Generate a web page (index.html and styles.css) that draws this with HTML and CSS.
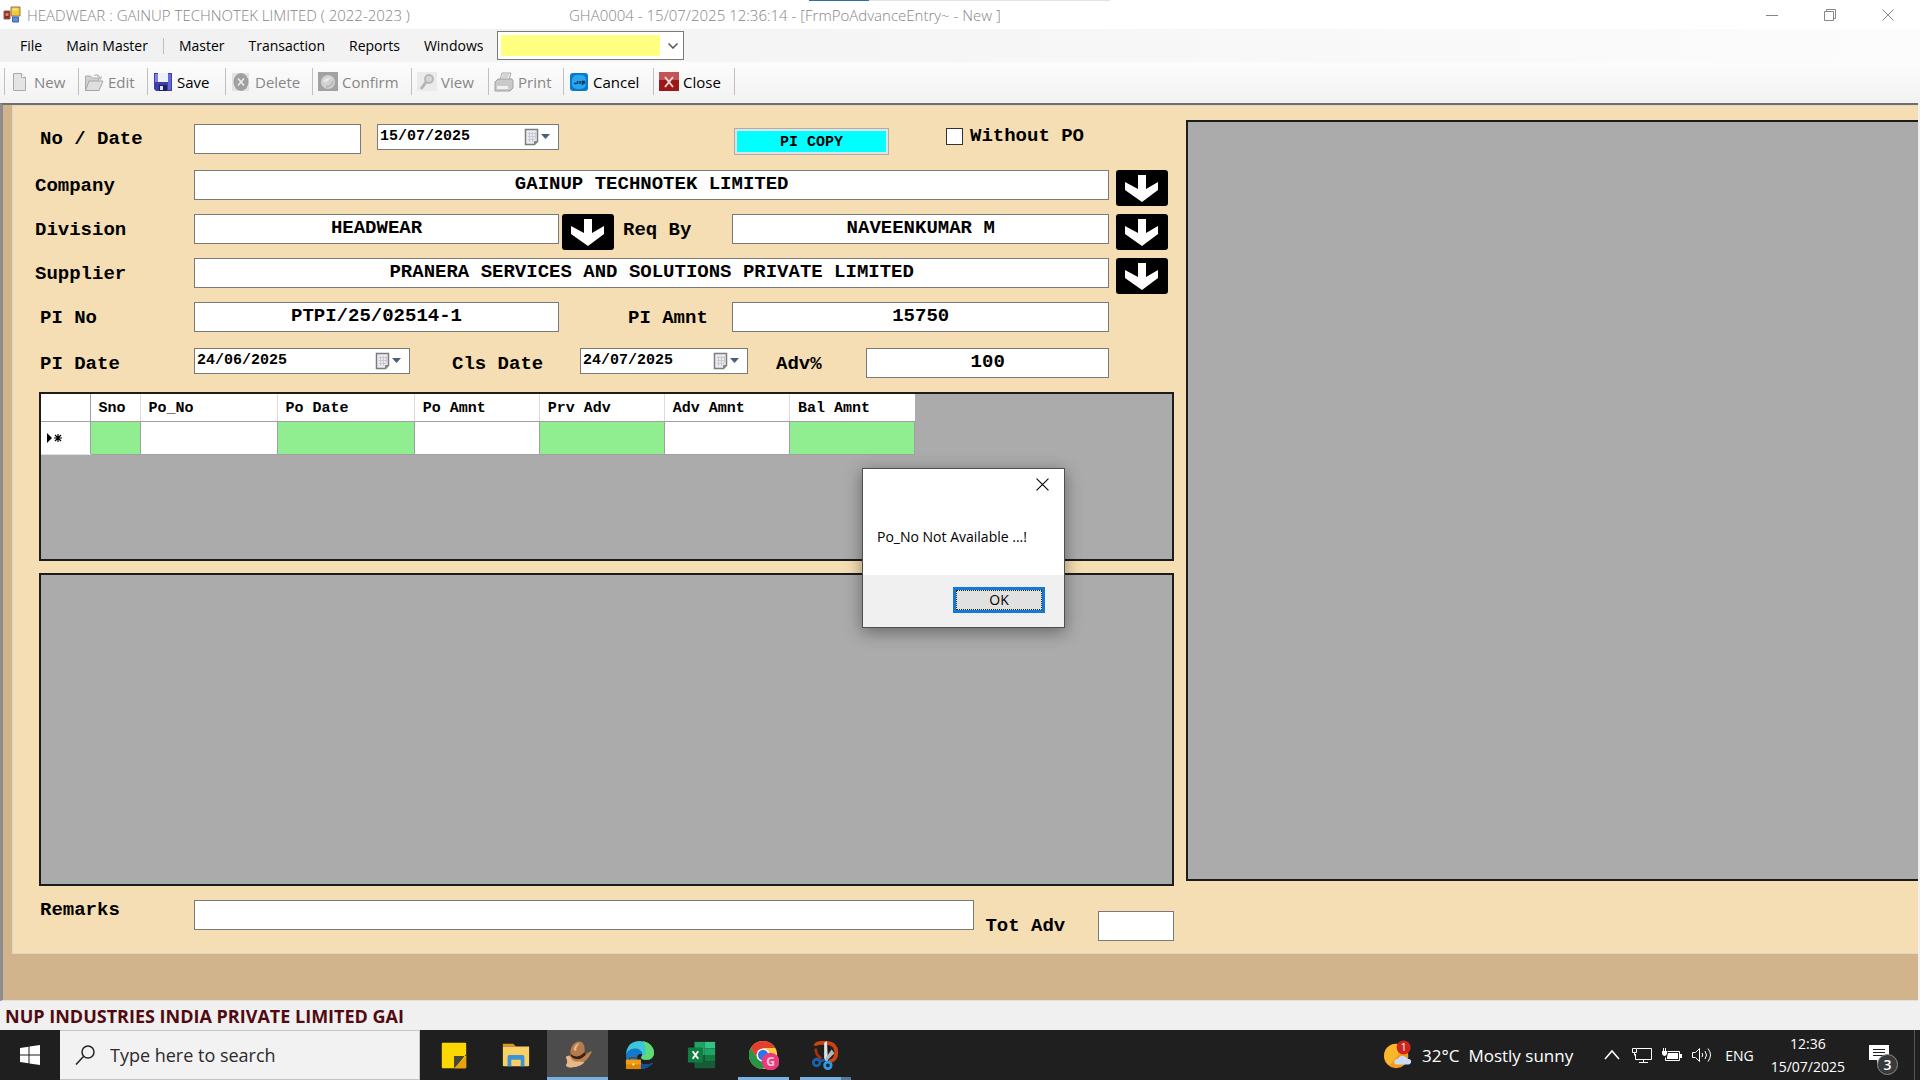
FILE: index.html
```html
<!DOCTYPE html>
<html lang="en">
<head>
    <meta charset="UTF-8">
    <meta name="viewport" content="width=device-width, initial-scale=1.0">
    <title>FrmPoAdvanceEntry</title>
    <link rel="stylesheet" href="styles.css">
</head>
<body>
    <svg class="sprite" xmlns="http://www.w3.org/2000/svg">
        <symbol id="arrow-down" viewBox="0 0 52 36">
            <path d="M22 5h8v14l12-7v8L26 32 9 20v-8l13 7z" fill="#fff"/>
        </symbol>
        <symbol id="calendar" viewBox="0 0 28 18">
            <path d="M1.500 1.500h12v12l-3 3h-9z" fill="#ececf0" stroke="#7d7d7d" stroke-width="1.500"/>
            <path d="M4 5.500h8M4 8.500h8M4 11.500h7M5.500 4v10M8.500 4v10M11.500 4v7" stroke="#c6c9d4" fill="none"/>
            <path d="M14 13h-4v4z" fill="#888"/>
            <path d="M17 6h9l-4.500 5z" fill="#45607f"/>
        </symbol>
        <symbol id="close-x" viewBox="0 0 12 12">
            <path d="M.5.5l11 11M11.500.5l-11 11" stroke="currentColor" fill="none"/>
        </symbol>
    </svg>

    <header class="title-bar">
        <svg class="app-icon" viewBox="0 0 18 18">
            <path d="M1 5h6v8H1z" fill="#a81f18" stroke="#6e6e6e"/>
            <path d="M2.500 7h3v3h-3z" fill="#e8766a"/>
            <path d="M8 1h9v9H8z" fill="#f3c63c" stroke="#8a7a4a"/>
            <path d="M9.500 11h6v5h-6z" fill="#5b8de0" stroke="#3c62a8"/>
            <path d="M9.500 2.500h5v2h-5z" fill="#fbe48d"/>
        </svg>
        <span class="title-left">HEADWEAR : GAINUP TECHNOTEK LIMITED ( 2022-2023 )</span>
        <span class="title-mid">GHA0004 - 15/07/2025 12:36:14 - [FrmPoAdvanceEntry~ - New ]</span>
        <div class="share-strip"></div>
        <div class="window-controls">
            <button type="button" aria-label="Minimize"><svg viewBox="0 0 12 12"><path d="M0 6.500h12" stroke="currentColor"/></svg></button>
            <button type="button" aria-label="Restore"><svg viewBox="0 0 12 12"><path d="M.5 2.500h9v9h-9zM2.500 2.500v-2h9v9h-2" stroke="currentColor" fill="none"/></svg></button>
            <button type="button" aria-label="Close"><svg><use href="#close-x"/></svg></button>
        </div>
    </header>

    <nav class="menu-bar">
        <a href="#">File</a>
        <a href="#">Main Master</a>
        <span class="menu-sep"></span>
        <a href="#">Master</a>
        <a href="#">Transaction</a>
        <a href="#">Reports</a>
        <a href="#">Windows</a>
        <div class="menu-combo">
            <select aria-label="Go to form"><option></option></select>
            <svg viewBox="0 0 10 6"><path d="M.5.5L5 5 9.500.5" stroke="#555" stroke-width="1.500" fill="none"/></svg>
        </div>
    </nav>

    <div class="tool-bar">
        <button type="button" class="w-new" disabled>
            <svg viewBox="0 0 20 20"><path d="M3.500 1.500h8l4 4v13h-12z" fill="#e4e4e4" stroke="#aaa"/><path d="M11.500 1.500v4h4" fill="#fff" stroke="#aaa"/></svg>New
        </button>
        <button type="button" class="w-edit" disabled>
            <svg viewBox="0 0 20 20"><path d="M1.500 18V4h5l2 2h6v3" fill="#d2d2d2" stroke="#aaa"/><path d="M1.500 18.500L5 9h14l-4 9.500z" fill="#dedede" stroke="#a5a5a5"/><path d="M9 4c3-3 6-2 7 1l2-1-1 4-4-2 2-.5c-1-2-3-2-6-1.500z" fill="#bbb"/></svg>Edit
        </button>
        <button type="button" class="w-save">
            <svg viewBox="0 0 20 20"><path d="M1 1h18v18H3l-2-2z" fill="#3c3fa8"/><path d="M2 2h3v8H2z" fill="#8184df"/><path d="M5 1h10v9H5z" fill="#eef0fb"/><path d="M6 13h8v6H6z" fill="#20225e"/><path d="M7 14h3v4H7z" fill="#dfe2f4"/><path d="M15 2h3v16h-3z" fill="#6569cf"/></svg>Save
        </button>
        <button type="button" class="w-delete" disabled>
            <svg viewBox="0 0 20 20"><path d="M1 1h17v18H1z" fill="#e2e2e2"/><ellipse cx="10" cy="10" rx="7.500" ry="9" fill="#a0a0a0"/><path d="M7 6.500l6 7m0-7l-6 7" stroke="#eee" stroke-width="1.500"/></svg>Delete
        </button>
        <button type="button" class="w-confirm" disabled>
            <svg viewBox="0 0 20 20"><path d="M0 0h20v19H0z" fill="#a2a2a2"/><circle cx="10" cy="10" r="7" fill="#d2d2d2"/><path d="M5 9q3-4 9-3-5 1-5 5z" fill="#e8e8e8"/><path d="M8 15q6-1 7-6" stroke="#bababa" stroke-width="2" fill="none"/></svg>Confirm
        </button>
        <button type="button" class="w-view" disabled>
            <svg viewBox="0 0 20 20"><path d="M0 0h20v19H0z" fill="#ebebeb"/><circle cx="12" cy="7" r="4" fill="#d6d6d6" stroke="#b8b8b8" stroke-width="2"/><path d="M9 10l-5 7" stroke="#b5b5b5" stroke-width="3"/></svg>View
        </button>
        <button type="button" class="w-print" disabled>
            <svg viewBox="0 0 20 20"><path d="M6 8l2-7h9l-2 7z" fill="#f2f2f2" stroke="#a9a9a9"/><path d="M1 10l3-3h14l1 2v7l-3 3H1z" fill="#c9c9c9" stroke="#a0a0a0"/><path d="M3 14h11v3H3z" fill="#f0f0f0"/><path d="M9 3h6M8 5h6" stroke="#b5b5b5"/></svg>Print
        </button>
        <button type="button" class="w-cancel">
            <svg viewBox="0 0 20 20"><rect x="1" y="1" width="18" height="18" rx="3" fill="#0b79c9"/><rect x="3" y="3" width="14" height="14" rx="5" fill="#2aa6ee"/><path d="M5 11.500h2.500M8.500 9v3M11 9v3M12.500 9.500h3v1.500h-2v2" stroke="#063a66" stroke-width="1.500" fill="none"/></svg>Cancel
        </button>
        <button type="button" class="w-close">
            <svg viewBox="0 0 20 20"><path d="M0 0h20v19H0z" fill="#9c1717"/><path d="M0 0h20v8H0z" fill="#c15454"/><path d="M6 5l8 10M14 5L6 15" stroke="#f0dada" stroke-width="2"/></svg>Close
        </button>
    </div>

    <main class="workspace">
        <form class="entry-form">
            <section class="entry">
                <div class="row row-first">
                    <label class="lead inset" for="no">No / Date</label>
                    <input id="no" class="no" type="text">
                    <div class="date-box date-entry">
                        <input type="text" value="15/07/2025" aria-label="Entry date">
                        <button type="button" aria-label="Open calendar"><svg><use href="#calendar"/></svg></button>
                    </div>
                    <button type="button" class="pi-copy">PI COPY</button>
                    <label class="without-po"><input type="checkbox">Without PO</label>
                </div>
                <div class="row">
                    <label class="lead" for="company">Company</label>
                    <input id="company" class="grow" type="text" value="GAINUP TECHNOTEK LIMITED">
                    <button type="button" class="pick pick-end" aria-label="Pick company"><svg><use href="#arrow-down"/></svg></button>
                </div>
                <div class="row">
                    <label class="lead" for="division">Division</label>
                    <input id="division" class="grow-left" type="text" value="HEADWEAR">
                    <button type="button" class="pick" aria-label="Pick division"><svg><use href="#arrow-down"/></svg></button>
                    <label class="req-by" for="req-by">Req By</label>
                    <input id="req-by" class="grow-right" type="text" value="NAVEENKUMAR M">
                    <button type="button" class="pick pick-end" aria-label="Pick requester"><svg><use href="#arrow-down"/></svg></button>
                </div>
                <div class="row">
                    <label class="lead" for="supplier">Supplier</label>
                    <input id="supplier" class="grow" type="text" value="PRANERA SERVICES AND SOLUTIONS PRIVATE LIMITED">
                    <button type="button" class="pick pick-end" aria-label="Pick supplier"><svg><use href="#arrow-down"/></svg></button>
                </div>
                <div class="row row-short">
                    <label class="lead inset" for="pi-no">PI No</label>
                    <input id="pi-no" class="grow-left" type="text" value="PTPI/25/02514-1">
                    <label class="pi-amnt" for="pi-amnt">PI Amnt</label>
                    <input id="pi-amnt" class="grow-right" type="text" value="15750">
                </div>
                <div class="row row-short row-last">
                    <label class="lead inset" for="pi-date">PI Date</label>
                    <div class="date-box date-pi">
                        <input id="pi-date" type="text" value="24/06/2025">
                        <button type="button" aria-label="Open calendar"><svg><use href="#calendar"/></svg></button>
                    </div>
                    <label class="cls-date" for="cls-date">Cls Date</label>
                    <div class="date-box date-cls">
                        <input id="cls-date" type="text" value="24/07/2025">
                        <button type="button" aria-label="Open calendar"><svg><use href="#calendar"/></svg></button>
                    </div>
                    <label class="adv" for="adv">Adv%</label>
                    <input id="adv" class="grow" type="text" value="100">
                </div>

                <div class="grid-box grid-po">
                    <table>
                        <thead>
                            <tr>
                                <th class="c-head"></th>
                                <th class="c-sno">Sno</th>
                                <th class="c-wide">Po_No</th>
                                <th class="c-wide">Po Date</th>
                                <th>Po Amnt</th>
                                <th>Prv Adv</th>
                                <th>Adv Amnt</th>
                                <th>Bal Amnt</th>
                            </tr>
                        </thead>
                        <tbody>
                            <tr>
                                <td class="marker"><svg viewBox="0 0 16 10"><path d="M0 0l5 5-5 5z"/><path d="M11 1v8M7 5h8M8 2l6 6M14 2l-6 6" stroke="#000" stroke-width="1.200"/></svg></td>
                                <td class="locked"></td>
                                <td></td>
                                <td class="locked"></td>
                                <td></td>
                                <td class="locked"></td>
                                <td></td>
                                <td class="locked"></td>
                            </tr>
                        </tbody>
                    </table>
                </div>
                <div class="grid-box grid-detail"></div>

                <div class="row row-foot">
                    <label class="lead inset" for="remarks">Remarks</label>
                    <input id="remarks" class="grow" type="text">
                    <label class="tot-label" for="tot-adv">Tot Adv</label>
                    <input id="tot-adv" class="tot" type="text">
                </div>
            </section>
            <aside class="grid-box grid-side"></aside>
        </form>
    </main>

    <div class="status-bar">NUP INDUSTRIES INDIA PRIVATE LIMITED GAI</div>

    <footer class="taskbar">
        <button type="button" class="start" aria-label="Start">
            <svg viewBox="0 0 20 20"><path d="M0 3l8.500-1.200v7.700H0zM9.500 1.600L20 0v9.500H9.500zM0 10.500h8.500v7.700L0 17zM9.500 10.500H20V20L9.500 18.400z" fill="#fff"/></svg>
        </button>
        <label class="search">
            <svg viewBox="0 0 20 20"><circle cx="13" cy="7" r="6" fill="none" stroke="#222" stroke-width="1.500"/><path d="M8.500 11.500L1 19.500" stroke="#222" stroke-width="1.500"/></svg>
            <input type="text" placeholder="Type here to search" aria-label="Type here to search">
        </label>
        <div class="apps">
            <button type="button" aria-label="Sticky Notes">
                <svg viewBox="0 0 32 32"><rect x="3" y="3" width="26" height="27" rx="1" fill="#fdd800"/><path d="M16 17h13v-2L17 30h-1z" fill="#48453c"/><path d="M29 17v12q0 1-1 1H16z" fill="#e5a50a"/></svg>
            </button>
            <button type="button" aria-label="File Explorer">
                <svg viewBox="0 0 32 32"><path d="M2 4h11l3 3H2z" fill="#d99a1b"/><path d="M2 7h28v20q0 1-1 1H3q-1 0-1-1z" fill="#fad067"/><path d="M7 18q0-2 2-2h14q2 0 2 2v10h-4v-7H11v7H7z" fill="#3b93d8"/></svg>
            </button>
            <button type="button" class="active" aria-label="Gainup ERP">
                <svg viewBox="0 0 32 32"><path d="M3 18q3-3 6-1 8 5 15-1 2-3 7-4-3 7-8 11-6 6-13 6-6 1-7-2 3-3 0-9z" fill="#b9804f"/><path d="M3 18q3-2 5 0 2 6 9 5 3 0 6 1-6 5-13 5-6 1-7-2 3-3 0-9z" fill="#e6b98a"/><path d="M8 16Q7 7 13 3q3-2 7-1 4 3 3 12-7 7-15 2z" fill="#b67b4b"/><path d="M11 10q2-6 7-7-4 4-4 9z" fill="#e5b98b"/><path d="M8 15q7 6 15-2l1 3q-7 8-15 2z" fill="#3a2113"/></svg>
            </button>
            <button type="button" aria-label="Edge">
                <svg viewBox="0 0 32 32"><path d="M1 16Q2 1 16 1q14 1 15 13-1 8-10 7-6-1-3-4 1-2-1-5-4-4-10-2-4 2-6 6z" fill="#3cc5dc"/><path d="M19 1q12 3 12 13-1 8-10 7-5-1-3-4 8 0 1-16z" fill="#5edb72"/><path d="M1 17q1-8 10-8 6 0 7 6-5-1-5 4 1 6 8 7 6 0 9-2-5 7-14 7Q2 30 1 17z" fill="#1479ce"/><path d="M13 19q1 6 8 7 5 0 9-2-5 7-14 7-4-4-3-12z" fill="#0f4f9c"/><rect x="1" y="21" width="16" height="10" fill="#dc8506"/><path d="M1 21h16v5H1z" fill="#f29d18"/><path d="M5 21v-2h8v2" fill="none" stroke="#6b3a05"/><rect x="8" y="25" width="2" height="2" fill="#fff0a8"/></svg>
            </button>
            <button type="button" aria-label="Excel">
                <svg viewBox="0 0 32 32"><path d="M8 2h11v14H8z" fill="#21a366"/><path d="M19 2h11v7H19z" fill="#33c481"/><path d="M19 9h11v7H19z" fill="#21a366"/><path d="M8 16h11v7H8z" fill="#185c37"/><path d="M19 16h11v7H19z" fill="#107c41"/><path d="M8 23h22v6q0 1-1 1H9q-1 0-1-1z" fill="#185c37"/><rect x="1" y="8" width="16" height="16" rx="1" fill="#107c41"/><path d="M6 12l6 8M12 12l-6 8" stroke="#fff" stroke-width="2"/></svg>
            </button>
            <button type="button" class="running" aria-label="Chrome">
                <svg viewBox="0 0 32 32"><circle cx="15" cy="16" r="15" fill="#ffcf3f"/><path d="M2 8.500A15 15 0 0 1 28 8.500H15L8.500 19.500z" fill="#e33e2f"/><path d="M2 8.500A15 15 0 0 0 15 31l7-11-13 0z" fill="#279447"/><circle cx="15" cy="16" r="7" fill="#fff"/><circle cx="15" cy="16" r="5.500" fill="#2f74e6"/><circle cx="23" cy="23" r="9.500" fill="#e93a7c"/><text x="23" y="28" text-anchor="middle" fill="#fbc7da" font-size="13" font-weight="700">G</text></svg>
            </button>
            <button type="button" class="running stacked" aria-label="Snip &amp; Sketch">
                <svg viewBox="0 0 32 32"><path d="M5 6Q5 3 12 3h5q10 1 10 10 0 9-8 10" fill="none" stroke="#cf4312" stroke-width="4"/><path d="M5 9q0 7 6 11" fill="none" stroke="#a5300a" stroke-width="3"/><path d="M14 3l3-2 1 21h-4z" fill="#dfe3e6"/><path d="M22 10l3 4-8 8-2-2z" fill="#b2b8bd"/><circle cx="6" cy="24" r="3.500" fill="none" stroke="#1763b2" stroke-width="3"/><circle cx="18" cy="27" r="3.500" fill="none" stroke="#2b9be6" stroke-width="3"/><path d="M9 23l6-2" stroke="#1763b2" stroke-width="2.500"/></svg>
            </button>
        </div>
        <div class="tray">
            <a href="#" class="weather">
                <svg viewBox="0 0 32 32"><circle cx="14" cy="17" r="13" fill="#f79a1c"/><path d="M3 10A13 13 0 0 1 23 8L7 27A13 13 0 0 1 3 10z" fill="#fbb72c"/><path d="M14 26q-2 0-2-3 1-3 4-3 2-4 6-3 3 1 4 3 4 0 4 3 0 3-3 3z" fill="#c6dcf8"/><circle cx="22" cy="8" r="7.500" fill="#c9261e"/><text x="22" y="12" text-anchor="middle" fill="#fff" font-size="11">1</text></svg>
                <span>32°C</span>
                <span>Mostly sunny</span>
            </a>
            <div class="tray-icons">
                <svg class="caret" viewBox="0 0 16 20"><path d="M1 14l7-8 7 8" fill="none" stroke="#fff" stroke-width="1.500"/></svg>
                <svg viewBox="0 0 22 20"><path d="M6 3.500h14.500v11H4.500V9M8 17.500h9M12.500 14.500v3" fill="none" stroke="#fff"/><path d="M1.500 3.500h4v4h-4zM3.500 7.500v3" fill="#1f1f1f" stroke="#fff"/></svg>
                <svg viewBox="0 0 22 20"><path d="M6.500 6.500h12v9h-14v-3" fill="none" stroke="#fff"/><path d="M7 8h10v6H6v-2zM19 9h2v4h-2zM1 6h5v3q-1 2-2.500 2T1 9zM2 3h1v3H2zM4 3h1v3H4z" fill="#fff"/></svg>
                <svg viewBox="0 0 22 20"><path d="M1.500 7.500h3l4-4v13l-4-4h-3z" fill="none" stroke="#fff"/><path d="M11 8q1.500 2 0 4M14 6q3 4 0 8M17 3.500q5 6.500 0 13" fill="none" stroke="#fff"/></svg>
            </div>
            <span class="lang">ENG</span>
            <div class="clock"><span>12:36</span><span>15/07/2025</span></div>
            <button type="button" class="notify" aria-label="Notifications">
                <svg viewBox="0 0 22 22"><path d="M1 1h20v15h-8l-4 5v-5H1z" fill="#fff"/><path d="M5 5.500h12M5 8.500h12M5 11.500h12" stroke="#1f1f1f"/></svg>
                <span class="badge">3</span>
            </button>
        </div>
    </footer>

    <div class="message-box" role="dialog" aria-label="Message">
        <div class="message-body">
            <button type="button" class="message-close" aria-label="Close"><svg><use href="#close-x"/></svg></button>
            <p>Po_No Not Available ...!</p>
        </div>
        <div class="message-actions">
            <button type="button" class="ok">OK</button>
        </div>
    </div>
</body>
</html>
```
FILE: styles.css
```css
:root {
    --wheat: #f5deb3;
    --tan: #d2b48c;
    --grid-gray: #ababab;
    --locked: #90ee90;
    --task: #1f1f1f;
    --ui: "Open Sans", "Noto Sans", sans-serif;
    --mono: "Liberation Mono", monospace;
}

* {
    box-sizing: border-box;
}

body {
    margin: 0;
    height: 100vh;
    display: flex;
    flex-direction: column;
    overflow: hidden;
    font-family: var(--ui);
    font-size: 15px;
    background: #f0f0f0;
    color: #000;
}

button,
input,
select {
    font: inherit;
    color: inherit;
    border-radius: 0;
    margin: 0;
}

button {
    padding: 0;
    border: none;
    background: none;
}

a {
    color: inherit;
    text-decoration: none;
}

svg {
    display: block;
    flex: none;
}

.sprite {
    position: absolute;
    width: 0;
    height: 0;
}

/* title bar */
.title-bar {
    position: relative;
    flex: none;
    height: 29px;
    display: flex;
    align-items: center;
    padding-left: 3px;
    background: #fff;
    color: #868686;
    font-size: 15px;
    font-weight: 300;
    white-space: nowrap;
}

.app-icon {
    width: 18px;
    height: 18px;
    margin-right: 6px;
}

.title-left {
    width: 542px;
}

.share-strip {
    position: absolute;
    top: 0;
    left: 809px;
    width: 301px;
    height: 1px;
    background: linear-gradient(90deg, #2f6da8 60px, #e3e3e3 60px);
}

.window-controls {
    display: flex;
    margin-left: auto;
    height: 100%;
    padding-right: 3px;
}

.window-controls button {
    width: 58px;
    display: flex;
    align-items: center;
    justify-content: center;
}

.window-controls svg {
    width: 12px;
    height: 12px;
}

/* menu */
.menu-bar {
    flex: none;
    height: 33px;
    display: flex;
    align-items: center;
    gap: 24px;
    padding-left: 20px;
    background: linear-gradient(90deg, #f0f0f0, #fcfcfc);
    font-size: 14px;
}

.menu-sep {
    width: 1px;
    height: 16px;
    margin: 0 -9px;
    background: #bdbdbd;
}

.menu-combo {
    position: relative;
    width: 187px;
    margin-left: -10px;
}

.menu-combo select {
    display: block;
    width: 100%;
    height: 29px;
    appearance: none;
    border: 1px solid #7a7a7a;
    background: linear-gradient(#ffff80, #ffff80) 3px 3px / calc(100% - 26px) 21px no-repeat #fff;
}

.menu-combo svg {
    position: absolute;
    right: 6px;
    top: 12px;
    width: 10px;
    height: 6px;
    pointer-events: none;
}

/* toolbar */
.tool-bar {
    flex: none;
    height: 41px;
    display: flex;
    padding: 6px 0 8px 4px;
    background: linear-gradient(#fcfcfc, #f2f2f2);
}

.tool-bar button {
    display: flex;
    align-items: center;
    gap: 4px;
    padding-left: 5px;
    border-left: 1px solid #c0c0c0;
    font-size: 15px;
}

.tool-bar button:disabled {
    color: #868686;
}

.tool-bar button:last-child {
    border-right: 1px solid #c0c0c0;
}

.tool-bar svg {
    width: 20px;
    height: 20px;
}

.w-new { width: 74px; }
.w-edit { width: 69px; }
.w-save { width: 78px; }
.w-delete { width: 87px; }
.w-confirm { width: 99px; }
.w-view { width: 77px; }
.w-print { width: 75px; }
.w-cancel { width: 90px; }
.w-close { width: 82px; }

/* form area */
.workspace {
    flex: 1;
    min-height: 0;
    display: flex;
    flex-direction: column;
    margin-right: 2px;
    padding: 0 0 46px 9px;
    border-top: 2px solid #6f6f6b;
    border-left: 3px solid #8d8d8d;
    border-bottom: 1px solid #e6e0d8;
    background: var(--tan);
}

.entry-form {
    flex: 1;
    min-height: 0;
    display: grid;
    grid-template-columns: 1140fr 732fr;
    gap: 12px;
    padding: 14px 0 0 22px;
    border: 1px solid #dcd6cc;
    border-right: none;
    background: var(--wheat);
    font-family: var(--mono);
    font-weight: 700;
    font-size: 19px;
}

.entry {
    display: flex;
    flex-direction: column;
    min-width: 0;
    padding: 4px 0 12px;
}

.row {
    flex: none;
    height: 30px;
    display: flex;
    align-items: flex-start;
    margin-bottom: 14px;
    padding-right: 6px;
    line-height: 32px;
}

.row-first {
    margin-bottom: 16px;
    line-height: 30px;
}

.row-short {
    padding-right: 65px;
    margin-bottom: 16px;
}

.row-last {
    margin-bottom: 14px;
}

.row label {
    white-space: nowrap;
}

.row .lead {
    flex: none;
    width: 159px;
}

.row .inset {
    padding-left: 5px;
}

.row input[type="text"] {
    height: 30px;
    min-width: 0;
    padding: 0 2px 2px;
    border: 1px solid #7a7a7a;
    background: #fff;
    text-align: center;
}

.row .grow {
    flex: 1;
}

.row .grow-left {
    flex: 29;
}

.row .grow-right {
    flex: 30;
}

.row .no {
    width: 167px;
    margin-right: 16px;
}

.date-box {
    flex: none;
    height: 26px;
    display: flex;
    align-items: center;
    border: 1px solid #7a7a7a;
    background: #fff;
    font-size: 15px;
}

.row .date-box input {
    flex: 1;
    height: 24px;
    border: none;
    padding: 0 2px;
    text-align: left;
}

.date-box button {
    margin-right: 6px;
}

.date-box svg {
    width: 28px;
    height: 18px;
}

.date-entry { width: 182px; }
.date-pi { width: 216px; }
.date-cls { width: 168px; }

.pi-copy {
    width: 155px;
    height: 27px;
    margin: 4px 57px 0 175px;
    border: 1px solid #adadad;
    background: #0ff;
    box-shadow: inset 0 0 0 2px #e1e1e1;
    font-size: 15px;
    line-height: 27px;
}

.without-po {
    display: flex;
    align-items: center;
    gap: 7px;
    line-height: 24px;
}

.without-po input {
    appearance: none;
    width: 17px;
    height: 17px;
    border: 1px solid #333;
    background: #fff;
}

.pick {
    flex: none;
    width: 52px;
    height: 36px;
    margin-left: 3px;
    border-radius: 3px;
    background: #000;
}

.pick-end {
    margin-left: 7px;
}

.pick svg {
    width: 52px;
    height: 36px;
}

.row .req-by {
    width: 118px;
    padding-left: 9px;
}

.row .pi-amnt {
    width: 173px;
    padding-left: 69px;
}

.row .cls-date {
    width: 170px;
    padding-left: 42px;
}

.row .adv {
    width: 118px;
    padding-left: 28px;
}

/* data grids */
.grid-box {
    border: 2px solid #1c1c1c;
    background: var(--grid-gray);
}

.grid-po {
    flex: none;
    height: 169px;
    margin: 0 0 12px 4px;
}

.grid-detail {
    flex: 1;
    min-height: 0;
    margin: 0 0 14px 4px;
}

.grid-side {
    margin-bottom: 72px;
    border-right: none;
}

table {
    border-collapse: collapse;
    table-layout: fixed;
    width: 874px;
    font-size: 15px;
}

th {
    width: 125px;
    height: 27px;
    padding: 3px 0 0 8px;
    background: #fff;
    border-right: 1px solid #dcdcdc;
    border-bottom: 1px solid #a0a0a0;
    text-align: left;
    line-height: 20px;
    white-space: nowrap;
}

th:last-child {
    border-right: none;
}

.c-head {
    width: 49px;
    border-right-color: #a0a0a0;
}

.c-sno { width: 50px; }
.c-wide { width: 137px; }

td {
    height: 33px;
    padding: 0;
    background: #fff;
    border: 1px solid #a0a0a0;
}

.locked {
    background: var(--locked);
}

.marker {
    padding-left: 6px;
    border-left: none;
    border-bottom-color: #e3e3e3;
}

.marker svg {
    width: 16px;
    height: 10px;
}

.row-foot {
    height: 41px;
    margin: 0;
    padding: 0;
    line-height: 30px;
}

.row-foot .lead {
    line-height: 20px;
}

.row .tot-label {
    width: 124px;
    padding-left: 11px;
    align-self: flex-end;
}

.row .tot {
    width: 76px;
    align-self: flex-end;
}

.status-bar {
    flex: none;
    height: 29px;
    padding-left: 5px;
    background: #f0f0f0;
    color: #500a10;
    font-size: 18px;
    font-weight: 700;
    line-height: 31px;
    white-space: nowrap;
}

/* taskbar */
.taskbar {
    flex: none;
    height: 50px;
    display: flex;
    background: var(--task);
    color: #fff;
}

.start {
    width: 60px;
    display: flex;
    align-items: center;
    justify-content: center;
}

.start svg {
    width: 20px;
    height: 20px;
}

.search {
    width: 360px;
    display: flex;
    align-items: center;
    gap: 15px;
    padding-left: 15px;
    border: 1px solid #c4c4c4;
    border-left: none;
    background: #f2f2f2;
}

.search svg {
    width: 20px;
    height: 20px;
}

.search input {
    flex: 1;
    min-width: 0;
    padding: 0;
    border: none;
    outline: none;
    background: none;
    color: #2b2b2b;
    font-size: 18px;
}

.search input::placeholder {
    color: #2b2b2b;
}

.apps {
    display: flex;
    gap: 1px;
    padding-left: 3px;
}

.apps button {
    position: relative;
    width: 61px;
    display: flex;
    align-items: center;
    justify-content: center;
}

.apps svg {
    width: 30px;
    height: 30px;
}

.apps .active {
    background: #4c4c4c;
}

.apps .active::after,
.apps .running::after {
    content: '';
    position: absolute;
    left: 5px;
    right: 5px;
    bottom: 0;
    height: 3px;
    background: #76b3e4;
}

.apps .active::after {
    left: 0;
    right: 0;
}

.apps .stacked::after {
    background: linear-gradient(90deg, #76b3e4 41px, #56789a 41px);
}

.tray {
    display: flex;
    align-items: center;
    margin-left: auto;
    padding-right: 5px;
    white-space: nowrap;
}

.weather {
    display: flex;
    align-items: center;
    gap: 9px;
    margin-right: 31px;
    font-size: 17px;
}

.weather svg {
    width: 30px;
    height: 30px;
}

.tray-icons {
    display: flex;
    gap: 8px;
    margin-right: 12px;
}

.tray-icons svg {
    width: 22px;
    height: 20px;
}

.tray-icons .caret {
    width: 16px;
    margin-right: 3px;
}

.lang {
    font-size: 14px;
}

.clock {
    display: flex;
    flex-direction: column;
    align-items: center;
    margin: 0 23px 0 17px;
    font-size: 14px;
    line-height: 23px;
}

.notify {
    position: relative;
    width: 47px;
    height: 50px;
    border-right: 1px solid #555;
}

.notify svg {
    width: 22px;
    height: 22px;
}

.badge {
    position: absolute;
    left: 9px;
    top: 24px;
    width: 21px;
    height: 21px;
    border: 1px solid #8a8a8a;
    border-radius: 50%;
    background: #3a3a3a;
    font-size: 14px;
    font-weight: 600;
    line-height: 19px;
    text-align: center;
}

/* message box floating over the form */
.message-box {
    position: absolute;
    left: 862px;
    top: 468px;
    width: 203px;
    border: 1px solid #4f4f4f;
    background: #fff;
    box-shadow: 0 4px 16px rgba(0, 0, 0, 0.4);
    font-size: 14px;
}

.message-body {
    display: flex;
    flex-direction: column;
    height: 106px;
    padding: 9px 15px 0 14px;
}

.message-close {
    align-self: flex-end;
}

.message-close svg {
    width: 13px;
    height: 13px;
}

.message-body p {
    margin: 36px 0 0;
    line-height: 20px;
    white-space: nowrap;
}

.message-actions {
    display: flex;
    justify-content: flex-end;
    height: 52px;
    padding: 12px 19px 0 0;
    background: #f0f0f0;
}

.ok {
    width: 92px;
    height: 26px;
    border: 3px solid #1578d4;
    background: #e1e1e1;
    outline: 1px dotted #222;
    outline-offset: -4px;
    line-height: 20px;
}
```
